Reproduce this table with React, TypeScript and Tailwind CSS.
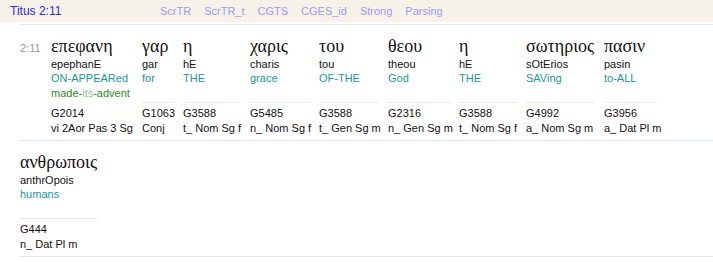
import React from "react";

type Word = {
  greek: string;
  translit: string;
  english: React.ReactNode;
  twoLines?: boolean;
  strong: string;
  morph: string;
  width: string;
};

const Advent = () => (
  <>
    <div className="text-[#179a9a]">ON-APPEARed</div>
    <div className="text-[#2e8b22]">
      made-<span className="text-[#8cc08c]">its</span>-advent
    </div>
  </>
);

const lineOne: Word[] = [
  { greek: "επεφανη", translit: "epephanE", english: <Advent />, twoLines: true, strong: "G2014", morph: "vi 2Aor Pas 3 Sg", width: "w-[82px]" },
  { greek: "γαρ", translit: "gar", english: "for", strong: "G1063", morph: "Conj", width: "w-[32px]" },
  { greek: "η", translit: "hE", english: "THE", strong: "G3588", morph: "t_ Nom Sg f", width: "w-[58px]" },
  { greek: "χαρις", translit: "charis", english: "grace", strong: "G5485", morph: "n_ Nom Sg f", width: "w-[60px]" },
  { greek: "του", translit: "tou", english: "OF-THE", strong: "G3588", morph: "t_ Gen Sg m", width: "w-[60px]" },
  { greek: "θεου", translit: "theou", english: "God", strong: "G2316", morph: "n_ Gen Sg m", width: "w-[62px]" },
  { greek: "η", translit: "hE", english: "THE", strong: "G3588", morph: "t_ Nom Sg f", width: "w-[58px]" },
  { greek: "σωτηριος", translit: "sOtErios", english: "SAVing", strong: "G4992", morph: "a_ Nom Sg m", width: "w-[69px]" },
  { greek: "πασιν", translit: "pasin", english: "to-ALL", strong: "G3956", morph: "a_ Dat Pl m", width: "w-[53px]" },
];

const lineTwo: Word[] = [
  { greek: "ανθρωποις", translit: "anthrOpois", english: "humans", strong: "G444", morph: "n_ Dat Pl m", width: "w-[78px]" },
];

const links = ["ScrTR", "ScrTR_t", "CGTS", "CGES_id", "Strong", "Parsing"];

const WordColumn = ({ word }: { word: Word }) => (
  <div className={`${word.width} shrink-0 whitespace-nowrap`}>
    <div className="h-[22px] text-[18px] leading-[22px] text-[#111] font-['Liberation_Serif','Times_New_Roman',serif]">
      {word.greek}
    </div>
    <div className="h-[14px] leading-[14px] text-[#111]">{word.translit}</div>
    <div className="h-[31px] leading-[15px] text-[#179a9a]">{word.english}</div>
    {/* separator under the gloss */}
    <div className={word.twoLines ? "h-px" : "h-px bg-[#e4efe4]"} />
    <div className="mt-[3px] leading-[15px] text-[#111]">{word.strong}</div>
    <div className="leading-[15px] text-[#111]">{word.morph}</div>
  </div>
);

const App = () => {
  return (
    <div className="min-h-screen bg-white text-[11px] font-['Liberation_Sans',Arial,sans-serif]">
      {/* HEADER */}
      <div className="flex h-[22px] items-center bg-[#f6f2e7] pl-[10px] leading-[22px]">
        <span className="w-[150px] shrink-0 text-[12px] text-[#2a2af2]">Titus 2:11</span>
        <div className="flex gap-[13px] text-[#9a9af5]">
          {links.map((l) => (
            <span key={l}>{l}</span>
          ))}
        </div>
      </div>

      {/* VERSE */}
      <div className="ml-[20px] mt-[2px] border-t border-[#dde4f6]">
        <div className="flex border-b border-[#dde4f6] pt-[10px] pb-[4px]">
          <div className="w-[31px] shrink-0 leading-[26px] text-[#999]">2:11</div>
          <div className="flex gap-[9px]">
            {lineOne.map((w, i) => (
              <WordColumn key={i} word={w} />
            ))}
          </div>
        </div>
        <div className="flex gap-[9px] border-b border-[#dde4f6] pt-[10px] pb-[4px]">
          {lineTwo.map((w, i) => (
            <WordColumn key={i} word={w} />
          ))}
        </div>
      </div>
    </div>
  );
};

export default App;
